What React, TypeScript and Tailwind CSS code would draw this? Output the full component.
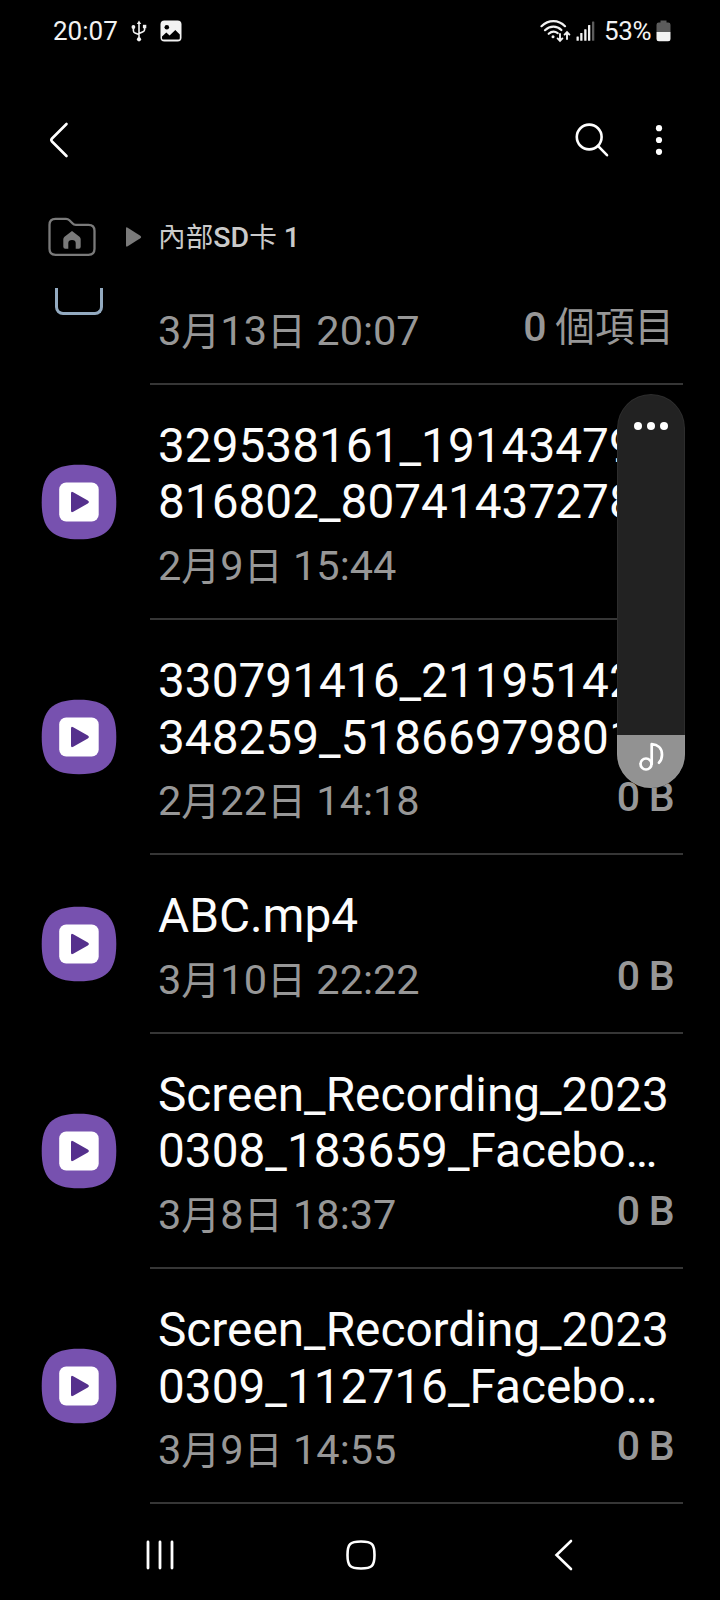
import React from 'react';

type FileItem = {
  lines: string[];
  date: string;
  size: string;
};

const files: FileItem[] = [
  { lines: ['329538161_19143479', '816802_80741437278'], date: '2月9日 15:44', size: '0 B' },
  { lines: ['330791416_21195142', '348259_51866979801'], date: '2月22日 14:18', size: '0 B' },
  { lines: ['ABC.mp4'], date: '3月10日 22:22', size: '0 B' },
  { lines: ['Screen_Recording_2023', '0308_183659_Facebo…'], date: '3月8日 18:37', size: '0 B' },
  { lines: ['Screen_Recording_2023', '0309_112716_Facebo…'], date: '3月9日 14:55', size: '0 B' },
];

// Han characters are set a little smaller and lighter than the Latin text around them
function MixedText({ text, hanClass = 'text-[0.94em]' }: { text: string; hanClass?: string }) {
  return (
    <>
      {text.split(/([\u4e00-\u9fff]+)/).map((part, i) =>
        i % 2 ? (
          <span key={i} className={`font-normal tracking-normal ${hanClass}`}>{part}</span>
        ) : (
          part
        )
      )}
    </>
  );
}

function StatusBar() {
  return (
    <header className="flex h-[62px] items-center pl-[53px] pr-[49px] text-[26px] leading-[62px] text-[#f2f2f2]">
      <span className="w-[78px]">20:07</span>
      {/* USB */}
      <svg className="h-[22px] w-[16px] shrink-0" viewBox="0 0 16 22" fill="none" stroke="#f2f2f2" strokeWidth="1.6">
        <path d="M8 3v16M2.4 7.5v3.2q0 1.6 1.6 2.2l4 1.6M13.6 7v2.6q0 1.6-1.6 2.2l-4 1.8" />
        <path d="M8 .5l2.2 3.6H5.8z" fill="#f2f2f2" stroke="none" />
        <circle cx="8" cy="19.3" r="2.1" fill="#f2f2f2" stroke="none" />
        <circle cx="2.4" cy="7" r="1.9" fill="#f2f2f2" stroke="none" />
        <path d="M11.9 4.8h3.4v3.4h-3.4z" fill="#f2f2f2" stroke="none" />
      </svg>
      {/* Screenshot saved */}
      <svg className="ml-[13px] h-[22px] w-[22px] shrink-0" viewBox="0 0 22 22">
        <rect x="0.5" y="0.5" width="21" height="21" rx="4" fill="#f2f2f2" />
        <circle cx="6.8" cy="7.3" r="2.3" fill="#000" />
        <path d="M2 16.5l4.3-4 3.3 3 5.7-5.500 4.500 4.500v3.800q0 1.200-1.200 1.200H3.200Q2 19.500 2 18.300z" fill="#000" />
      </svg>
      <div className="ml-auto flex items-center">
        {/* Wi-Fi */}
        <svg className="h-[24px] w-[31px] shrink-0" viewBox="0 0 31 24" fill="none" stroke="#f2f2f2" strokeWidth="2.2" strokeLinecap="round">
          <path d="M1.5 7.2C8.5.3 18.5.3 25 7.2" />
          <path d="M5 11.2c5-4.8 11.8-4.8 16.4-.2" />
          <path d="M8.7 14.8c3-2.7 6.2-2.7 9-.7" />
          <circle cx="13" cy="17.8" r="1.5" fill="#f2f2f2" stroke="none" />
          <path d="M20 15v6.5M17.6 19.4l2.4 2.5 2.4-2.5M27 20v-6.5M24.6 15.6l2.4-2.5 2.4 2.5" strokeWidth="1.9" />
        </svg>
        {/* Signal */}
        <svg className="ml-[5px] h-[20px] w-[19px] shrink-0" viewBox="0 0 19 20" fill="#f2f2f2">
          <rect x="0.5" y="15.5" width="2.3" height="4.2" rx="0.5" />
          <rect x="4.2" y="12" width="2.3" height="7.7" rx="0.5" />
          <rect x="8.2" y="8.2" width="2.3" height="11.5" rx="0.5" />
          <rect x="12" y="4" width="2.3" height="15.7" rx="0.5" />
          <rect x="16" y="0.5" width="2.3" height="19.2" rx="0.5" fill="#5c5c5c" />
        </svg>
        <span className="ml-[9px] w-[48px] tracking-[-0.4px]">53%</span>
        {/* Battery */}
        <svg className="ml-[4px] h-[22px] w-[15px] shrink-0" viewBox="0 0 15 22">
          <path d="M4.5 .5h6v2h1.7q2.3 0 2.3 2.3V12H.5V4.8q0-2.3 2.3-2.3h1.7z" fill="#5c5c5c" />
          <path d="M.5 12h14v7q0 2.3-2.3 2.3H2.8Q.5 21.3.5 19z" fill="#f2f2f2" />
        </svg>
      </div>
    </header>
  );
}

function Toolbar() {
  return (
    <div className="flex h-[156px] items-center justify-between pl-[47px] pr-[55px]">
      <svg className="h-[40px] w-[24px]" viewBox="0 0 24 40" fill="none" stroke="#fff" strokeWidth="2.6" strokeLinecap="round" strokeLinejoin="round">
        <path d="M19.5 4L5 18.5q-1.4 1.5 0 3L19.5 36" />
      </svg>
      <div className="flex items-center gap-[43px]">
        <svg className="h-[36px] w-[36px]" viewBox="0 0 36 36" fill="none" stroke="#fff" strokeWidth="2.6" strokeLinecap="round">
          <circle cx="15.2" cy="15" r="12.4" />
          <path d="M24.2 24.2l8.8 9" />
        </svg>
        <svg className="h-[36px] w-[12px]" viewBox="0 0 12 36" fill="#fff">
          <circle cx="6" cy="6.2" r="3.1" />
          <circle cx="6" cy="18" r="3.1" />
          <circle cx="6" cy="29.8" r="3.1" />
        </svg>
      </div>
    </div>
  );
}

function Breadcrumb() {
  return (
    <nav className="flex h-[70px] items-start pl-[48px]">
      <svg className="-mt-[2px] h-[42px] w-[50px]" viewBox="0 0 50 42">
        <path
          d="M7.5 2H18q2 0 3.4 1.4l3 3Q25.8 8 27.8 8H40.5Q46.5 8 46.5 14v18q0 6-6 6h-33q-6 0-6-6V8q0-6 6-6z"
          transform="translate(0 .8)"
          fill="none"
          stroke="#7a7a7a"
          strokeWidth="2.3"
        />
        <path d="M24 15l7.5 5.8q1.2 1 1.2 2.5v7.5q0 2-2 2h-3V27q0-3-3.7-3t-3.7 3v5.8h-3q-2 0-2-2v-7.5q0-1.5 1.2-2.500z" fill="#7a7a7a" />
      </svg>
      <svg className="ml-[27px] mt-[9px] h-[20px] w-[18px]" viewBox="0 0 18 20" fill="#7a7a7a">
        <path d="M1 1.5Q1-.3 2.7.7l12.6 8q1.7 1.3 0 2.6l-12.6 8Q1 20.300 1 18.500z" />
      </svg>
      <span className="ml-[15px] whitespace-nowrap text-[28.5px] font-medium leading-[40px] text-[#cacaca]">
        <MixedText text="內部SD卡 1" hanClass="text-[0.97em]" />
      </span>
    </nav>
  );
}

function VideoIcon() {
  return (
    <svg className="h-[76px] w-[76px]" viewBox="0 0 76 76">
      <path d="M38 .7C65 .7 75.3 11 75.3 38S65 75.3 38 75.3 .7 65 .7 38 11 .7 38 .7z" fill="#7751af" />
      <rect x="18.2" y="18.5" width="39.5" height="39" rx="7" fill="#fff" />
      <path d="M30 29.500q0-2.500 2.200-1.200l14.600 8.200q2.200 1.500 0 3l-14.600 8.300Q30 49 30 46.500z" fill="#55308d" />
    </svg>
  );
}

function Meta({ date, size }: { date: string; size: string }) {
  return (
    <div className="flex h-[50px] items-start justify-between whitespace-nowrap pl-[8px] pr-[9px] text-[41.5px] leading-[50px] text-[#979797]">
      <span>
        <MixedText text={date} />
      </span>
      <span className="-mt-[4px] text-[41px] font-medium tracking-[-0.7px]">
        <MixedText text={size} hanClass="text-[0.965em]" />
      </span>
    </div>
  );
}

function FileRow({ file }: { file: FileItem }) {
  return (
    <li className="flex pl-[41px] pr-[37px]">
      <div className="flex w-[109px] items-center">
        <VideoIcon />
      </div>
      <div className="flex-1 border-b-2 border-[#363636] pb-[26.75px] pt-[33px]">
        <div className="pl-[8px] text-[47.75px] leading-[56.75px] text-[#fcfcfc]">
          {file.lines.map((line) => (
            <p key={line} className="whitespace-nowrap">{line}</p>
          ))}
        </div>
        <div className="mt-[10px]">
          <Meta date={file.date} size={file.size} />
        </div>
      </div>
    </li>
  );
}

function VolumeSlider() {
  return (
    <div className="absolute left-[617px] top-[394px] flex h-[394px] w-[68px] flex-col justify-between overflow-hidden rounded-full bg-[#222222]">
      <div className="flex justify-center gap-[5px] pt-[28px]">
        <span className="h-[8px] w-[8px] rounded-full bg-white" />
        <span className="h-[8px] w-[8px] rounded-full bg-white" />
        <span className="h-[8px] w-[8px] rounded-full bg-white" />
      </div>
      <div className="flex h-[53px] justify-center bg-[#929292] pt-[7px]">
        <svg className="h-[30px] w-[28px]" viewBox="0 0 28 30" fill="none" stroke="#fff" strokeWidth="2.7" strokeLinecap="round" strokeLinejoin="round">
          <circle cx="9" cy="22" r="5.5" />
          <path d="M14.700 22V2.200C20.500 2.500 25 6 25 12.700c0 3.300-1.200 6-3 8" />
        </svg>
      </div>
      <div className="absolute inset-0 rounded-full border border-white/5" />
    </div>
  );
}

function NavigationBar() {
  return (
    <footer className="flex h-[90px] items-center justify-between px-[145px]">
      <svg className="h-[32px] w-[30px]" viewBox="0 0 30 32" stroke="#fff" strokeWidth="2.8" strokeLinecap="round">
        <path d="M3 3v26M15 3v26M27 3v26" />
      </svg>
      <svg className="-ml-[5px] h-[32px] w-[32px]" viewBox="0 0 32 32" fill="none" stroke="#fff" strokeWidth="2.6">
        <path d="M16 2.5C27 2.5 29.5 5 29.5 16S27 29.5 16 29.5 2.5 27 2.5 16 5 2.5 16 2.5z" />
      </svg>
      <svg className="h-[32px] w-[24px]" viewBox="0 0 24 32" fill="none" stroke="#fff" strokeWidth="2.6" strokeLinecap="round">
        <path d="M20 2L5.5 16 20 30" />
      </svg>
    </footer>
  );
}

export default function App() {
  return (
    <div className="relative flex h-[1600px] w-[720px] flex-col overflow-hidden bg-black font-['Roboto','Noto_Sans_CJK_TC',sans-serif]">
      <StatusBar />
      <Toolbar />
      <Breadcrumb />
      <ul>
        {/* Folder row, scrolled half out of view */}
        <li className="flex h-[96.5px] pl-[55px] pr-[37px]">
          <div className="w-[95px]">
            <div className="h-[27px] w-[48px] rounded-b-[8px] border-x-[3px] border-b-[3px] border-[#93aac0]" />
          </div>
          <div className="flex flex-1 flex-col justify-end border-b-2 border-[#363636] pb-[27px]">
            <Meta date="3月13日 20:07" size="0 個項目" />
          </div>
        </li>
        {files.map((file) => (
          <FileRow key={file.date} file={file} />
        ))}
      </ul>
      <div className="mt-auto">
        <NavigationBar />
      </div>
      <VolumeSlider />
    </div>
  );
}
